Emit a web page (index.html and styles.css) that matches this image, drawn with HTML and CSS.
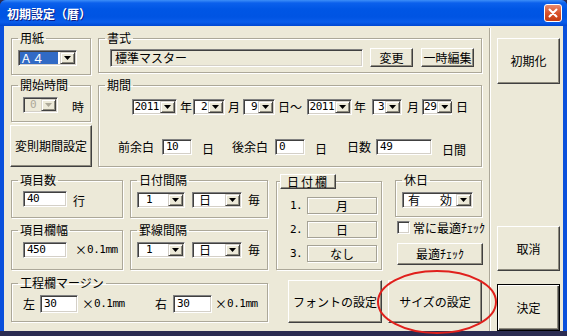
FILE: index.html
```html
<!DOCTYPE html>
<html lang="ja">
<head>
<meta charset="utf-8">
<title>初期設定（暦）</title>
<link rel="stylesheet" href="styles.css">
</head>
<body>
<div class="window">
  <div class="titlebar">
    <span class="title">初期設定（暦）</span>
    <span class="close">
      <svg width="18" height="18" viewBox="0 0 18 18">
        <defs>
          <linearGradient id="cg" x1="0" y1="0" x2="0" y2="1">
            <stop offset="0" stop-color="#E88D73"/>
            <stop offset="0.5" stop-color="#D9532C"/>
            <stop offset="1" stop-color="#C2390E"/>
          </linearGradient>
        </defs>
        <rect x="0.5" y="0.5" width="17" height="17" rx="2.5" fill="url(#cg)" stroke="#fff"/>
        <path d="M5.5 5.5 L12.5 12.5 M12.5 5.5 L5.5 12.5" stroke="#fff" stroke-width="2" stroke-linecap="round"/>
      </svg>
    </span>
  </div>
  <div class="client">
    <div class="main">
      <div class="top">
        <div class="top-left">
          <fieldset class="grp g-paper">
            <legend>用紙</legend>
            <div class="row r-paper">
              <div class="sel w59"><span class="val hl">Ａ４</span><span class="dd"><i></i></span></div>
            </div>
          </fieldset>
          <fieldset class="grp g-start">
            <legend>開始時間</legend>
            <div class="row r-start">
              <div class="sel dis w35"><span class="val num pl5">0</span><span class="dd"><i></i></span></div>
              <span class="unit u-ji">時</span>
            </div>
          </fieldset>
          <div class="btn b-henso">変則期間設定</div>
        </div>
        <div class="top-right">
          <fieldset class="grp g-format">
            <legend>書式</legend>
            <div class="row r-format">
              <div class="inp ro w253">標準マスター</div>
              <div class="btn b-change">変更</div>
              <div class="btn b-temp">一時編集</div>
            </div>
          </fieldset>
          <fieldset class="grp g-period">
            <legend>期間</legend>
            <div class="row r-p1">
              <div class="sel w45"><span class="val num r">2011</span><span class="dd"><i></i></span></div>
              <span class="unit m3">年</span>
              <div class="sel w32 m1"><span class="val num r">2</span><span class="dd"><i></i></span></div>
              <span class="unit m3">月</span>
              <div class="sel w32 m3"><span class="val num r">9</span><span class="dd"><i></i></span></div>
              <span class="unit m3">日～</span>
              <div class="sel w45 m5"><span class="val num r">2011</span><span class="dd"><i></i></span></div>
              <span class="unit m2">年</span>
              <div class="sel w30 m6"><span class="val num r">3</span><span class="dd"><i></i></span></div>
              <span class="unit m5">月</span>
              <div class="sel w30 m3"><span class="val num r">29</span><span class="dd"><i></i></span></div>
              <span class="unit m4">日</span>
            </div>
            <div class="row r-p2">
              <span class="lbl w36">前余白</span>
              <div class="inp num w30 m8">10</div>
              <span class="unit low m10">日</span>
              <span class="lbl w36 m18">後余白</span>
              <div class="inp num w30 m7">0</div>
              <span class="unit low m10">日</span>
              <span class="lbl m20">日数</span>
              <div class="inp num w56 m5">49</div>
              <span class="unit lower m10">日間</span>
            </div>
          </fieldset>
        </div>
      </div>

      <div class="bot-up">
        <div class="col col-a">
          <fieldset class="grp g-rows">
            <legend>項目数</legend>
            <div class="row r-in5">
              <div class="inp num w44">40</div>
              <span class="unit low m6">行</span>
            </div>
          </fieldset>
          <fieldset class="grp g-width">
            <legend>項目欄幅</legend>
            <div class="row r-in6">
              <div class="inp num w44">450</div>
              <span class="mm m8">×<span class="num">0.1mm</span></span>
            </div>
          </fieldset>
        </div>
        <div class="col col-b">
          <fieldset class="grp g-rows">
            <legend>日付間隔</legend>
            <div class="row r-sel">
              <div class="sel w48"><span class="val num pl8">1</span><span class="dd"><i></i></span></div>
              <div class="sel w50 m7"><span class="val pl5">日</span><span class="dd"><i></i></span></div>
              <span class="unit m6">毎</span>
            </div>
          </fieldset>
          <fieldset class="grp g-width">
            <legend>罫線間隔</legend>
            <div class="row r-sel">
              <div class="sel w48"><span class="val num pl8">1</span><span class="dd"><i></i></span></div>
              <div class="sel w50 m7"><span class="val pl5">日</span><span class="dd"><i></i></span></div>
              <span class="unit m6">毎</span>
            </div>
          </fieldset>
        </div>
        <fieldset class="grp g-datecol">
          <legend class="lg-btn"><span class="btn b-legend">日付欄</span></legend>
          <div class="dc-rows">
            <div class="dc-row"><span class="dc-num num">1.</span><span class="dc-box">月</span></div>
            <div class="dc-row"><span class="dc-num num">2.</span><span class="dc-box">日</span></div>
            <div class="dc-row"><span class="dc-num num">3.</span><span class="dc-box">なし</span></div>
          </div>
        </fieldset>
        <div class="col col-d">
          <fieldset class="grp g-holiday">
            <legend>休日</legend>
            <div class="row r-sel">
              <div class="sel w71"><span class="val spread"><span>有</span><span>効</span></span><span class="dd"><i></i></span></div>
            </div>
          </fieldset>
          <div class="chk-row">
            <span class="chk"></span>
            <span class="chk-lbl">常に最適ﾁｪｯｸ</span>
          </div>
          <div class="btn b-check">最適ﾁｪｯｸ</div>
        </div>
      </div>

      <div class="bot-low">
        <fieldset class="grp g-margin">
          <legend>工程欄マージン</legend>
          <div class="row r-in6">
            <span class="unit">左</span>
            <div class="inp num w38 h18 m5">30</div>
            <span class="mm m4">×<span class="num">0.1mm</span></span>
            <span class="unit m29">右</span>
            <div class="inp num w39 h18 m6">30</div>
            <span class="mm m3">×<span class="num">0.1mm</span></span>
          </div>
        </fieldset>
        <div class="btn b-font">フォントの設定</div>
        <div class="btn b-size">サイズの設定</div>
      </div>
    </div>

    <div class="side">
      <div class="btn b-init">初期化</div>
      <div class="btn b-cancel">取消</div>
      <div class="btn b-ok">決定</div>
    </div>
  </div>

  <svg class="circle" width="124" height="68" viewBox="0 0 124 68">
    <ellipse cx="62" cy="33" rx="59" ry="31" fill="none" stroke="#E0201C" stroke-width="2"/>
  </svg>
</div>
</body>
</html>
```

FILE: styles.css
```css
* { box-sizing: border-box; }
html, body { margin: 0; padding: 0; }
body {
  width: 567px;
  height: 336px;
  overflow: hidden;
  background: #2B2C52;
  font-family: "Noto Sans CJK JP", "Noto Sans", sans-serif;
  font-size: 12px;
  line-height: 12px;
  color: #000;
}
.window {
  position: relative;
  width: 567px;
  height: 331px;
  display: flex;
  flex-direction: column;
  background: #0A50DC;
  border-radius: 6px 6px 0 0;
}
.titlebar {
  height: 26px;
  flex: none;
  display: flex;
  align-items: center;
  justify-content: space-between;
  padding: 0 5px 0 7px;
  border-radius: 6px 6px 0 0;
  background: linear-gradient(to bottom, #3D8EF8 0, #0B60EC 3px, #0056E5 9px, #0054E3 17px, #0A5DEB 22px, #0047D2 26px);
}
.title {
  color: #fff;
  font-weight: bold;
  font-size: 12px;
  line-height: 14px;
  text-shadow: 1px 1px 0 #0A1E8A;
  margin-top: 2px;
}
.close { width: 18px; height: 18px; display: block; }
.close svg { display: block; }

.client {
  flex: 1;
  margin: 0 4px 4px 4px;
  background: #ECE9D8;
  display: flex;
  padding: 6px 0 0 6px;
}
.main { width: 473px; display: flex; flex-direction: column; }
.side {
  width: 74px;
  margin-left: 6px;
  margin-top: -4px;
  border-left: 1px solid #ACA899;
  box-shadow: inset 1px 0 0 #fff;
  padding: 10px 0 0 7px;
  display: flex;
  flex-direction: column;
}

/* group boxes */
.grp {
  margin: 0;
  padding: 0;
  min-width: 0;
  border: 1px solid #ACA899;
  box-shadow: inset 1px 1px 0 #fff, 1px 1px 0 #fff;
}
.grp legend {
  margin-left: 6px;
  padding: 0 2px;
  height: 12px;
  line-height: 12px;
}
.grp legend.lg-btn { margin-left: 3px; padding: 0; height: 15px; }

.row { display: flex; align-items: center; }

/* layout of sections */
.top { display: flex; gap: 6px; }
.top-left { width: 82px; display: flex; flex-direction: column; }
.top-right { width: 385px; display: flex; flex-direction: column; }
.g-paper { margin: 0 1px; height: 43px; }
.r-paper { margin: 6px 0 0 6px; }
.g-start { margin: 4px 1px 0; height: 43px; }
.r-start { margin: 6px 0 0 11px; }
.u-ji { margin-left: 14px; padding-top: 4px; }
.b-henso { margin-top: 3px; height: 42px; width: 82px; }

.g-format { width: 384px; height: 41px; }
.r-format { margin: 4px 0 0 11px; }
.b-change { margin-left: 7px; width: 43px; height: 19px; }
.b-temp { margin-left: 8px; width: 53px; height: 19px; }

.g-period { width: 384px; height: 88px; margin-top: 6px; }
.r-p1 { margin: 8px 0 0 33px; }
.r-p2 { margin: 23px 0 0 19px; }

.bot-up { display: flex; align-items: flex-start; margin-top: 7px; }
.col { display: flex; flex-direction: column; }
.col-a { margin-left: 1px; width: 112px; }
.col-b { margin-left: 7px; width: 138px; }
.g-rows { height: 44px; }
.g-width { height: 46px; margin-top: 6px; }
.r-in5 { margin: 5px 0 0 11px; }
.r-in6 { margin: 6px 0 0 11px; }
.r-sel { margin: 6px 0 0 6px; }

.g-datecol { margin-left: 8px; width: 106px; height: 96px; }
.b-legend { width: 56px; height: 15px; letter-spacing: 2px; }
.dc-rows { margin: 8px 0 0 13px; display: flex; flex-direction: column; gap: 7px; }
.dc-row { display: flex; align-items: center; }
.dc-num { width: 17px; }
.dc-box {
  width: 70px;
  height: 17px;
  display: flex;
  align-items: center;
  justify-content: center;
  border: 1px solid #A5A295;
  box-shadow: inset 1px 1px 0 #fff, 1px 1px 0 #fff;
}

.col-d { margin-left: 13px; width: 88px; }
.g-holiday { width: 87px; height: 43px; }
.chk-row { display: flex; align-items: center; margin: 4px 0 0 2px; height: 13px; }
.chk {
  width: 13px;
  height: 13px;
  flex: none;
  background: #fff;
  border: 1px solid;
  border-color: #808080 #fff #fff #808080;
  box-shadow: inset 1px 1px 0 #404040, inset -1px -1px 0 #D4D0C8;
}
.chk-lbl { margin-left: 3px; white-space: nowrap; }
.b-check { margin: 9px 0 0 2px; width: 86px; height: 22px; }

.bot-low { display: flex; align-items: flex-start; margin-top: 7px; }
.g-margin { margin-left: 1px; width: 257px; height: 45px; }
.b-font { margin: 3px 0 0 20px; width: 94px; height: 43px; }
.b-size { margin: 3px 0 0 6px; width: 94px; height: 43px; }

.b-init { width: 63px; height: 46px; }
.b-cancel { width: 63px; height: 45px; margin-top: 142px; }
.b-ok { width: 63px; height: 47px; margin-top: 13px; }

/* controls */
.btn {
  display: flex;
  align-items: center;
  justify-content: center;
  flex: none;
  background: #ECE9D8;
  border: 1px solid;
  border-color: #fff #404040 #404040 #fff;
  box-shadow: inset -1px -1px 0 #8E8B7E;
  white-space: nowrap;
}
.b-ok {
  border: 1px solid #000;
  box-shadow: inset 1px 1px 0 #fff, inset -1px -1px 0 #404040, inset -2px -2px 0 #8E8B7E;
}

.sel, .inp {
  flex: none;
  height: 16px;
  background: #fff;
  border: 1px solid;
  border-color: #808080 #fff #fff #808080;
  box-shadow: inset 1px 1px 0 #404040, inset -1px -1px 0 #D4D0C8;
}
.sel { display: flex; padding: 1px; }
.sel .val {
  flex: 1;
  display: flex;
  align-items: center;
  white-space: nowrap;
}
.sel .val.r { justify-content: flex-end; padding-right: 1px; }
.sel .val.hl { background: #316AC5; color: #fff; margin-right: 2px; padding-left: 0; }
.sel .val.spread { justify-content: space-between; padding: 0 4px 0 4px; }
.pl8 { padding-left: 7px; }
.pl5 { padding-left: 5px; }
.dd {
  width: 15px;
  flex: none;
  background: #ECE9D8;
  border: 1px solid;
  border-color: #D4D0C8 #404040 #404040 #D4D0C8;
  box-shadow: inset 1px 1px 0 #fff, inset -1px -1px 0 #8E8B7E;
  display: flex;
  align-items: center;
  justify-content: center;
}
.dd i {
  display: block;
  width: 7px;
  height: 4px;
  background: #000;
  clip-path: polygon(0 0, 100% 0, 50% 100%);
}
.sel.dis { background: #ECE9D8; }
.sel.dis .val { color: #ACA899; }
.sel.dis .dd i { background: #ACA899; }

.inp { display: flex; align-items: center; padding: 0 3px; white-space: nowrap; }
.inp.ro { background: #ECE9D8; height: 18px; padding-left: 4px; }
.h18 { height: 18px; }

.num {
  font-family: "DejaVu Sans Mono", "Liberation Mono", monospace;
  font-size: 11px;
  letter-spacing: -0.5px;
}
.mm { width: 44px; white-space: nowrap; display: flex; align-items: center; }
.unit.low { padding-top: 4px; }
.unit.lower { padding-top: 6px; }

/* widths & margins */
.w30 { width: 30px; } .w32 { width: 32px; } .w35 { width: 35px; } .w36 { width: 36px; }
.w38 { width: 38px; } .w39 { width: 39px; } .w44 { width: 44px; } .w45 { width: 45px; }
.w48 { width: 48px; } .w50 { width: 50px; } .w56 { width: 56px; } .w59 { width: 59px; }
.w71 { width: 71px; } .w253 { width: 253px; }
.m1 { margin-left: 1px; } .m2 { margin-left: 2px; } .m3 { margin-left: 3px; }
.m4 { margin-left: 4px; } .m5 { margin-left: 5px; } .m6 { margin-left: 6px; }
.m7 { margin-left: 7px; } .m8 { margin-left: 8px; } .m10 { margin-left: 10px; }
.m18 { margin-left: 18px; } .m20 { margin-left: 20px; } .m29 { margin-left: 29px; }

.circle { position: absolute; left: 375px; top: 269px; }
```
